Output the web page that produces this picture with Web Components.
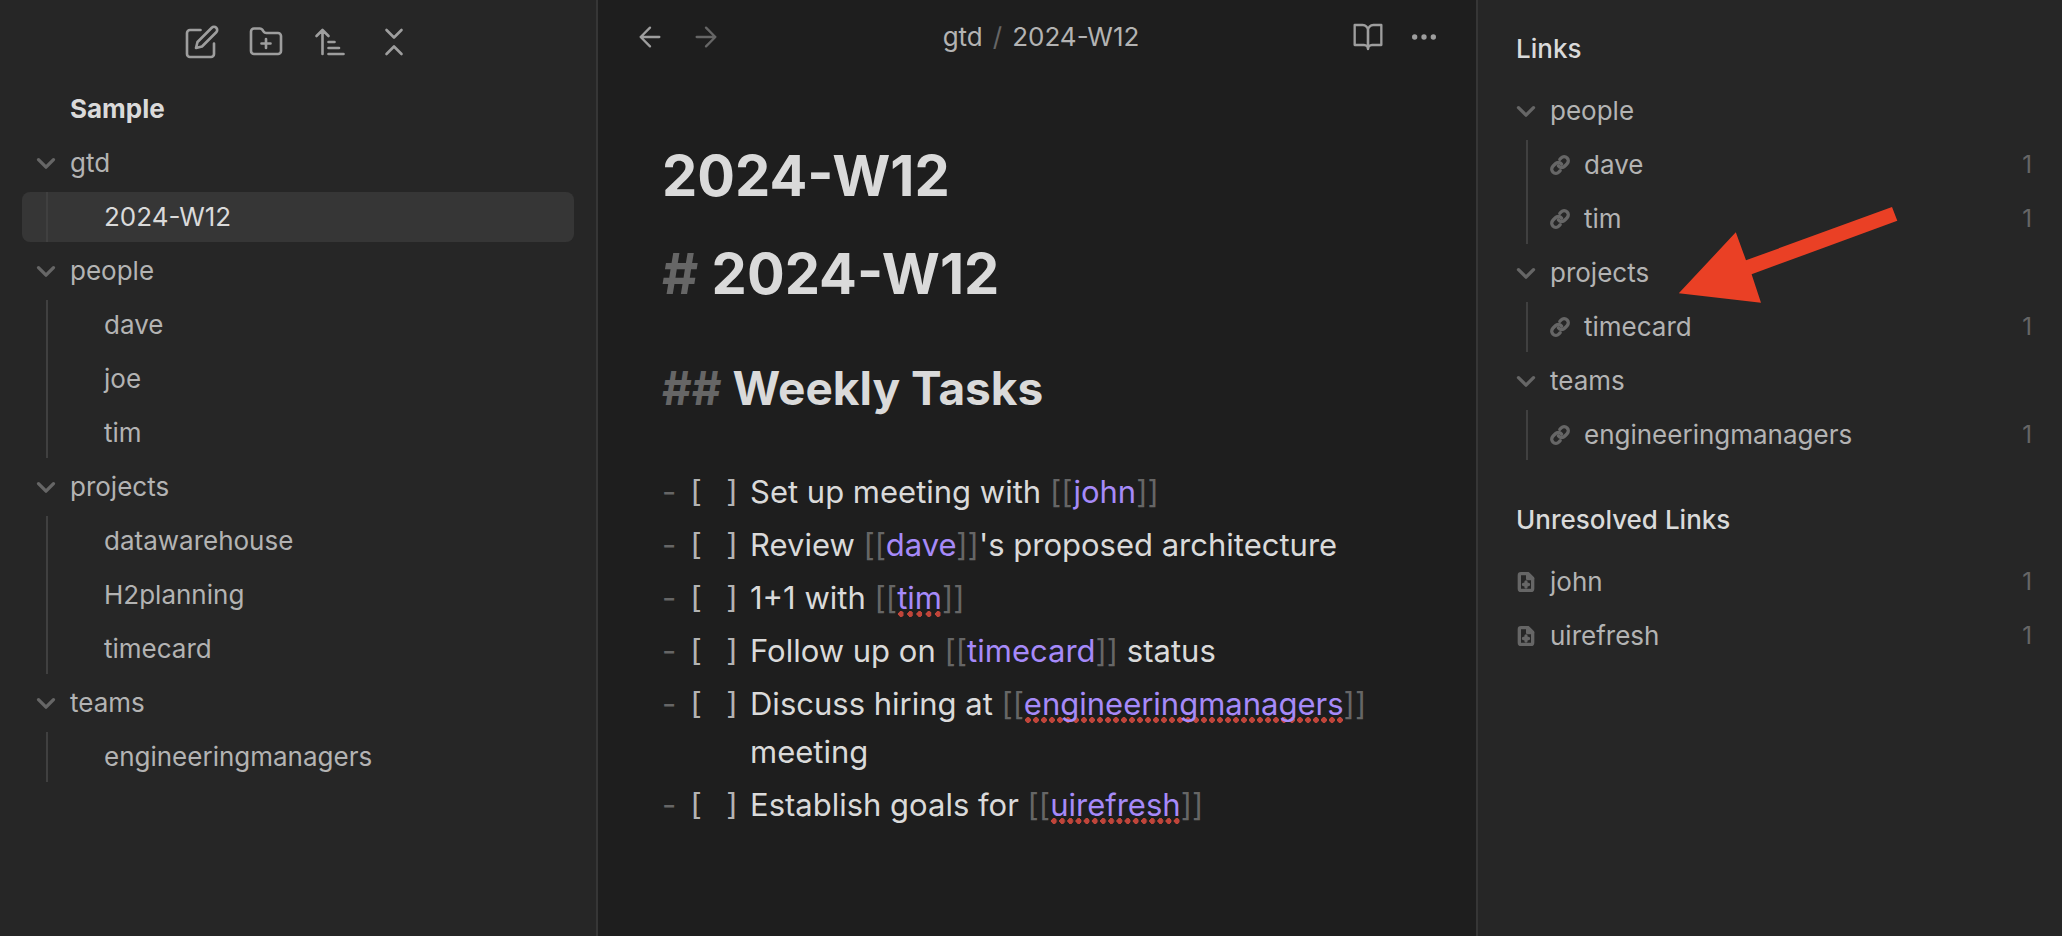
<!DOCTYPE html>
<html lang="en">
<head>
<meta charset="utf-8">
<meta name="viewport" content="width=device-width, initial-scale=1">
<title>2024-W12 - Sample</title>
<style>
  :root {
    --bg: #1e1e1e;
    --bg-side: #262626;
    --border: #363636;
    --guide: #404040;
    --text: #dadada;
    --muted: #b3b3b3;
    --faint: #666666;
    --icon: #9e9e9e;
    --link: #a68af9;
    --hover: #363636;
    --typo: #c0453a;
  }
  body {
    margin: 0;
    background: var(--bg);
    color: var(--text);
    font-family: Inter, "Liberation Sans", sans-serif;
    font-size: 26px;
    line-height: 34px;
  }
</style>
</head>
<body>
<notes-app></notes-app>

<script>
const ICONS = {
  edit: '<path d="M11 4H4a2 2 0 0 0-2 2v14a2 2 0 0 0 2 2h14a2 2 0 0 0 2-2v-7"/><path d="M18.5 2.5a2.121 2.121 0 0 1 3 3L12 15l-4 1 1-4 9.5-9.5z"/>',
  folderPlus: '<path d="M4 20h16a2 2 0 0 0 2-2V8a2 2 0 0 0-2-2h-7.93a2 2 0 0 1-1.66-.9l-.82-1.2A2 2 0 0 0 7.93 3H4a2 2 0 0 0-2 2v13c0 1.1.9 2 2 2Z"/><path d="M12 10v6M9 13h6"/>',
  sort: '<path d="m3 8 4-4 4 4M7 4v16M11 12h4M11 16h7M11 20h10"/>',
  collapse: '<path d="m7 20 5-5 5 5M7 4l5 5 5-5"/>',
  back: '<path d="M19 12H5M12 19l-7-7 7-7"/>',
  forward: '<path d="M5 12h14M12 5l7 7-7 7"/>',
  book: '<path d="M2 3h6a4 4 0 0 1 4 4v14a3 3 0 0 0-3-3H2z"/><path d="M22 3h-6a4 4 0 0 0-4 4v14a3 3 0 0 1 3-3h7z"/>',
  more: '<circle cx="12" cy="12" r="1"/><circle cx="19" cy="12" r="1"/><circle cx="5" cy="12" r="1"/>',
  chevron: '<path d="M3 8l9 9 9-9"/>',
  link: '<path d="M10 13a5 5 0 0 0 7.54.54l3-3a5 5 0 0 0-7.07-7.07l-1.72 1.71"/><path d="M14 11a5 5 0 0 0-7.54-.54l-3 3a5 5 0 0 0 7.07 7.07l1.71-1.71"/>',
  filePlus: '<path d="M14.5 2H6a2 2 0 0 0-2 2v16a2 2 0 0 0 2 2h12a2 2 0 0 0 2-2V7.5L14.5 2z"/><path d="M14 2v6h6M12 12v6M9 15h6"/>'
};

function define(name, html, setup) {
  const template = document.createElement('template');
  template.innerHTML = html;
  customElements.define(name, class extends HTMLElement {
    constructor() {
      super();
      this.attachShadow({ mode: 'open' }).append(template.content.cloneNode(true));
    }
    connectedCallback() {
      if (setup && !this.ready) {
        this.ready = true;
        setup(this, this.shadowRoot);
      }
    }
  });
}

/* line icon on a 24-unit grid: name, size and stroke attributes */
define('line-icon', `
  <style>
    :host { display: block; flex: none; }
    svg { display: block; overflow: visible; fill: none; stroke: currentColor; stroke-linecap: round; stroke-linejoin: round; }
  </style>
  <svg viewBox="0 0 24 24" aria-hidden="true"></svg>`,
  (host, root) => {
    const svg = root.querySelector('svg');
    const size = host.getAttribute('size') || '20';
    svg.setAttribute('width', size);
    svg.setAttribute('height', size);
    svg.setAttribute('stroke-width', host.getAttribute('stroke') || '4');
    svg.innerHTML = ICONS[host.getAttribute('name')];
  });

define('icon-button', `
  <style>
    :host { display: block; color: var(--icon); }
    :host([dim]) { color: var(--faint); }
    button { display: grid; place-items: center; width: 56px; height: 52px; margin: 0; padding: 0; border: 0; border-radius: 8px; background: none; color: inherit; cursor: pointer; }
  </style>
  <button type="button"><slot></slot></button>`,
  (host, root) => root.querySelector('button').setAttribute('aria-label', host.getAttribute('label')));

/* one row: icon slot, name, optional count */
define('tree-row', `
  <style>
    :host { display: block; color: var(--muted); }
    a { display: flex; align-items: center; gap: 14px; box-sizing: border-box; height: 50px; padding: 0 6px 0 14px; border-radius: 8px; color: inherit; text-decoration: none; }
    :host([nested]) a { padding-left: 48px; }
    :host([active]) { color: var(--text); }
    :host([active]) a { background: var(--hover); }
    .icon { width: 20px; color: var(--faint); flex: none; }
    .name { flex: 1; min-width: 0; }
    .count { color: var(--faint); font-size: 24px; }
  </style>
  <a href="#"><span class="icon"><slot name="icon"></slot></span><span class="name"><slot></slot></span><span class="count"></span></a>`,
  (host, root) => {
    const count = root.querySelector('.count');
    if (host.hasAttribute('count')) count.textContent = host.getAttribute('count');
    else count.remove();
  });

/* folder with an indentation guide beside its children */
define('tree-folder', `
  <style>
    :host { display: grid; gap: 4px; color: var(--muted); }
    button { display: flex; align-items: center; gap: 14px; height: 50px; width: 100%; margin: 0; padding: 0 14px; border: 0; background: none; color: inherit; font: inherit; text-align: left; cursor: pointer; }
    line-icon { color: var(--faint); }
    .children { position: relative; display: grid; gap: 4px; }
    .children[hidden] { display: none; }
    .children::before { content: ""; position: absolute; z-index: 1; left: 24px; top: 0; bottom: 0; width: 2px; background: var(--guide); }
  </style>
  <button type="button" aria-expanded="true"><line-icon name="chevron"></line-icon><span class="label"></span></button>
  <div class="children"><slot></slot></div>`,
  (host, root) => {
    root.querySelector('.label').textContent = host.getAttribute('label');
    const button = root.querySelector('button');
    const children = root.querySelector('.children');
    button.addEventListener('click', () => {
      children.hidden = !children.hidden;
      button.setAttribute('aria-expanded', String(!children.hidden));
    });
  });

define('file-explorer', `
  <style>
    :host { display: block; background: var(--bg-side); border-right: 2px solid var(--border); padding: 16px 22px; }
    .toolbar { display: flex; justify-content: center; gap: 8px; margin-bottom: 16px; }
    h2 { display: flex; align-items: center; height: 50px; margin: 0 0 4px; padding-left: 48px; font-size: 26px; font-weight: 700; }
    nav { display: grid; gap: 4px; }
  </style>
  <div class="toolbar">
    <icon-button label="New note"><line-icon name="edit" size="36" stroke="1.75"></line-icon></icon-button>
    <icon-button label="New folder"><line-icon name="folderPlus" size="36" stroke="1.75"></line-icon></icon-button>
    <icon-button label="Change sort order"><line-icon name="sort" size="36" stroke="1.75"></line-icon></icon-button>
    <icon-button label="Collapse all"><line-icon name="collapse" size="36" stroke="1.75"></line-icon></icon-button>
  </div>
  <h2>Sample</h2>
  <nav>
    <tree-folder label="gtd"><tree-row nested active>2024-W12</tree-row></tree-folder>
    <tree-folder label="people">
      <tree-row nested>dave</tree-row>
      <tree-row nested>joe</tree-row>
      <tree-row nested>tim</tree-row>
    </tree-folder>
    <tree-folder label="projects">
      <tree-row nested>datawarehouse</tree-row>
      <tree-row nested>H2planning</tree-row>
      <tree-row nested>timecard</tree-row>
    </tree-folder>
    <tree-folder label="teams"><tree-row nested>engineeringmanagers</tree-row></tree-folder>
  </nav>`);

define('wiki-link', `
  <style>
    :host { display: inline; color: var(--faint); }
    a { color: var(--link); text-decoration: none; }
    :host([misspelled]) a {
      padding-bottom: 1px;
      background-image: radial-gradient(circle closest-side at center, var(--typo) 90%, transparent);
      background-position: left bottom;
      background-size: 8px 6px;
      background-repeat: space no-repeat;
    }
  </style>[[<a href="#"><slot></slot></a>]]`);

define('task-line', `
  <style>
    :host { display: grid; grid-template-columns: 25px 63px 1fr; font-size: 31px; line-height: 48px; }
    .dash { color: var(--faint); }
    .box { color: var(--muted); font-family: "DejaVu Sans Mono", monospace; font-size: 30px; white-space: pre; }
  </style>
  <span class="dash">-</span><span class="box">[ ]</span><span><slot></slot></span>`);

define('note-heading', `
  <style>
    :host { display: block; }
    h1, h2 { margin: 0; font-weight: 700; }
    h1 { font-size: 56px; line-height: 72px; }
    h2 { font-size: 46px; line-height: 64px; }
    .mark { color: var(--faint); }
  </style>`,
  (host, root) => {
    const heading = document.createElement(host.getAttribute('level') === '2' ? 'h2' : 'h1');
    const marks = host.getAttribute('marks');
    if (marks) {
      const mark = document.createElement('span');
      mark.className = 'mark';
      mark.textContent = marks + ' ';
      heading.append(mark);
    }
    heading.append(document.createElement('slot'));
    root.append(heading);
  });

define('note-editor', `
  <style>
    :host { display: block; min-width: 0; background: var(--bg); }
    header { display: flex; align-items: center; padding: 11px 24px; color: var(--muted); }
    .group { display: flex; }
    .crumbs { flex: 1; display: flex; justify-content: center; gap: 10px; padding-left: 8px; }
    .crumbs a { color: inherit; text-decoration: none; }
    .sep { color: var(--faint); }
    article { padding: 66px 64px; }
    .body-title { margin-top: 26px; }
    .section { margin: 46px 0 48px; }
    .tasks { display: grid; gap: 5px; }
  </style>
  <header>
    <div class="group">
      <icon-button label="Back"><line-icon name="back" size="32" stroke="1.75"></line-icon></icon-button>
      <icon-button label="Forward" dim><line-icon name="forward" size="32" stroke="1.75"></line-icon></icon-button>
    </div>
    <div class="crumbs"><a href="#">gtd</a><span class="sep">/</span><span>2024-W12</span></div>
    <div class="group">
      <icon-button label="Reading view"><line-icon name="book" size="32" stroke="1.75"></line-icon></icon-button>
      <icon-button label="More options"><line-icon name="more" size="32" stroke="2"></line-icon></icon-button>
    </div>
  </header>
  <article>
    <note-heading>2024-W12</note-heading>
    <note-heading class="body-title" marks="#">2024-W12</note-heading>
    <note-heading class="section" level="2" marks="##">Weekly Tasks</note-heading>
    <div class="tasks">
      <task-line>Set up meeting with <wiki-link>john</wiki-link></task-line>
      <task-line>Review <wiki-link>dave</wiki-link>'s proposed architecture</task-line>
      <task-line>1+1 with <wiki-link misspelled>tim</wiki-link></task-line>
      <task-line>Follow up on <wiki-link>timecard</wiki-link> status</task-line>
      <task-line>Discuss hiring at <wiki-link misspelled>engineeringmanagers</wiki-link> meeting</task-line>
      <task-line>Establish goals for <wiki-link misspelled>uirefresh</wiki-link></task-line>
    </div>
  </article>`);

define('links-panel', `
  <style>
    :host { display: block; background: var(--bg-side); border-left: 2px solid var(--border); padding: 24px; }
    h2 { display: flex; align-items: center; height: 50px; margin: 0 0 12px; padding-left: 14px; font-size: 26px; font-weight: 500; }
    .rows { display: grid; gap: 4px; }
    .rows + h2 { margin-top: 35px; }
  </style>
  <h2>Links</h2>
  <div class="rows">
    <tree-folder label="people">
      <tree-row nested count="1"><line-icon slot="icon" name="link"></line-icon>dave</tree-row>
      <tree-row nested count="1"><line-icon slot="icon" name="link"></line-icon>tim</tree-row>
    </tree-folder>
    <tree-folder label="projects">
      <tree-row nested count="1"><line-icon slot="icon" name="link"></line-icon>timecard</tree-row>
    </tree-folder>
    <tree-folder label="teams">
      <tree-row nested count="1"><line-icon slot="icon" name="link"></line-icon>engineeringmanagers</tree-row>
    </tree-folder>
  </div>
  <h2>Unresolved Links</h2>
  <div class="rows">
    <tree-row count="1"><line-icon slot="icon" name="filePlus"></line-icon>john</tree-row>
    <tree-row count="1"><line-icon slot="icon" name="filePlus"></line-icon>uirefresh</tree-row>
  </div>`);

/* red annotation arrow laid over the links panel */
define('callout-arrow', `
  <style>
    :host { display: block; pointer-events: none; }
    svg { display: block; }
  </style>
  <svg width="220" height="98" viewBox="0 0 220 98" aria-hidden="true">
    <path fill="#ea4025" d="M.8 88.3 57.8 27.3 68 55.3 214 2l5.3 13.7L73.6 69.3 83 97.7z"/>
  </svg>`);

define('notes-app', `
  <style>
    :host { display: grid; grid-template-columns: 598px minmax(0, 1fr) 586px; min-height: 100vh; }
    .right { position: relative; display: grid; }
    callout-arrow { position: absolute; z-index: 2; left: 202px; top: 205px; }
  </style>
  <file-explorer></file-explorer>
  <note-editor></note-editor>
  <div class="right"><links-panel></links-panel><callout-arrow></callout-arrow></div>`);
</script>
</body>
</html>
